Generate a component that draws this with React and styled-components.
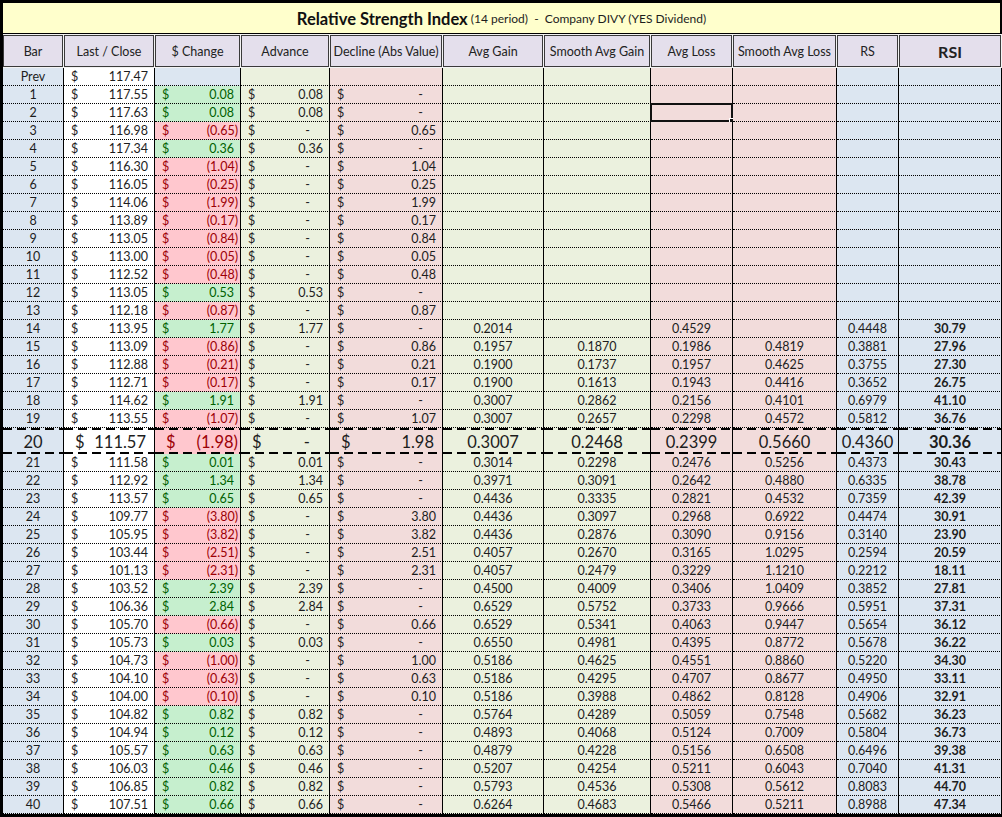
import React from "react";
import styled, { createGlobalStyle, css } from "styled-components";

const GlobalStyle = createGlobalStyle`
  html, body { margin: 0; padding: 0; background: #000; }
  body { font-family: Lato, "Open Sans", sans-serif; color: #1d1d1d; }
`;

const COLS = "61px 91px 86px 89px 113px 101px 107px 82px 104px 62px 1fr";

const BLUE = "#dce6f1";
const SAGE = "#ebf1de";
const ROSE = "#f2dcdb";
const WHITE = "#ffffff";
const GAIN_BG = "#c6efce";
const GAIN_FG = "#006100";
const LOSS_BG = "#ffc7ce";
const LOSS_FG = "#9c0006";

// bar, close, change, avg gain, smooth gain, avg loss, smooth loss, rs, rsi
const ROWS = [
  ["1", 117.55, 0.08],
  ["2", 117.63, 0.08],
  ["3", 116.98, -0.65],
  ["4", 117.34, 0.36],
  ["5", 116.3, -1.04],
  ["6", 116.05, -0.25],
  ["7", 114.06, -1.99],
  ["8", 113.89, -0.17],
  ["9", 113.05, -0.84],
  ["10", 113.0, -0.05],
  ["11", 112.52, -0.48],
  ["12", 113.05, 0.53],
  ["13", 112.18, -0.87],
  ["14", 113.95, 1.77, "0.2014", "", "0.4529", "", "0.4448", "30.79"],
  ["15", 113.09, -0.86, "0.1957", "0.1870", "0.1986", "0.4819", "0.3881", "27.96"],
  ["16", 112.88, -0.21, "0.1900", "0.1737", "0.1957", "0.4625", "0.3755", "27.30"],
  ["17", 112.71, -0.17, "0.1900", "0.1613", "0.1943", "0.4416", "0.3652", "26.75"],
  ["18", 114.62, 1.91, "0.3007", "0.2862", "0.2156", "0.4101", "0.6979", "41.10"],
  ["19", 113.55, -1.07, "0.3007", "0.2657", "0.2298", "0.4572", "0.5812", "36.76"],
  ["20", 111.57, -1.98, "0.3007", "0.2468", "0.2399", "0.5660", "0.4360", "30.36"],
  ["21", 111.58, 0.01, "0.3014", "0.2298", "0.2476", "0.5256", "0.4373", "30.43"],
  ["22", 112.92, 1.34, "0.3971", "0.3091", "0.2642", "0.4880", "0.6335", "38.78"],
  ["23", 113.57, 0.65, "0.4436", "0.3335", "0.2821", "0.4532", "0.7359", "42.39"],
  ["24", 109.77, -3.8, "0.4436", "0.3097", "0.2968", "0.6922", "0.4474", "30.91"],
  ["25", 105.95, -3.82, "0.4436", "0.2876", "0.3090", "0.9156", "0.3140", "23.90"],
  ["26", 103.44, -2.51, "0.4057", "0.2670", "0.3165", "1.0295", "0.2594", "20.59"],
  ["27", 101.13, -2.31, "0.4057", "0.2479", "0.3229", "1.1210", "0.2212", "18.11"],
  ["28", 103.52, 2.39, "0.4500", "0.4009", "0.3406", "1.0409", "0.3852", "27.81"],
  ["29", 106.36, 2.84, "0.6529", "0.5752", "0.3733", "0.9666", "0.5951", "37.31"],
  ["30", 105.7, -0.66, "0.6529", "0.5341", "0.4063", "0.9447", "0.5654", "36.12"],
  ["31", 105.73, 0.03, "0.6550", "0.4981", "0.4395", "0.8772", "0.5678", "36.22"],
  ["32", 104.73, -1.0, "0.5186", "0.4625", "0.4551", "0.8860", "0.5220", "34.30"],
  ["33", 104.1, -0.63, "0.5186", "0.4295", "0.4707", "0.8677", "0.4950", "33.11"],
  ["34", 104.0, -0.1, "0.5186", "0.3988", "0.4862", "0.8128", "0.4906", "32.91"],
  ["35", 104.82, 0.82, "0.5764", "0.4289", "0.5059", "0.7548", "0.5682", "36.23"],
  ["36", 104.94, 0.12, "0.4893", "0.4068", "0.5124", "0.7009", "0.5804", "36.73"],
  ["37", 105.57, 0.63, "0.4879", "0.4228", "0.5156", "0.6508", "0.6496", "39.38"],
  ["38", 106.03, 0.46, "0.5207", "0.4254", "0.5211", "0.6043", "0.7040", "41.31"],
  ["39", 106.85, 0.82, "0.5793", "0.4536", "0.5308", "0.5612", "0.8083", "44.70"],
  ["40", 107.51, 0.66, "0.6264", "0.4683", "0.5466", "0.5211", "0.8988", "47.34"],
];

const HEADERS = [
  "Bar",
  "Last / Close",
  "$ Change",
  "Advance",
  "Decline (Abs Value)",
  "Avg Gain",
  "Smooth Avg Gain",
  "Avg Loss",
  "Smooth Avg Loss",
  "RS",
];

const Sheet = styled.div`
  width: 1002px;
  min-height: 817px;
  box-sizing: border-box;
  padding: 3px 0 0 3px;
  background: #000;
  overflow: hidden;
`;

const TitleBar = styled.div`
  height: 31px;
  box-sizing: border-box;
  margin-right: 1px;
  padding-top: 1px;
  background: #ffffcc;
  border-bottom: 1px solid #000;
  border-right: 1px solid #000;
  display: flex;
  align-items: center;
  justify-content: center;
  white-space: pre;
`;

const TitleMain = styled.span`
  font-size: 16.5px;
  font-weight: 700;
  color: #111;
`;

const TitleSub = styled.span`
  font-size: 12px;
  color: #1d1d1d;
`;

const HeaderRow = styled.div`
  display: grid;
  grid-template-columns: ${COLS};
  padding: 1px 0;
  background: #f3f3f3;
`;

const HeaderCell = styled.div`
  height: 32px;
  box-sizing: border-box;
  margin-right: 1px;
  border: 1px solid #3a3a3a;
  background: #e4dfec;
  display: flex;
  align-items: center;
  justify-content: center;
  white-space: nowrap;
  font-size: ${(p) => (p.$strong ? "16px" : "12.5px")};
  font-weight: ${(p) => (p.$strong ? 700 : 400)};
  color: #222;
`;

const Row = styled.div`
  display: grid;
  grid-template-columns: ${COLS};
  height: ${(p) => (p.$big ? "26px" : "18px")};
  font-size: ${(p) => (p.$big ? "16.5px" : "12.5px")};
`;

const dash = "repeating-linear-gradient(90deg, #000 0 9px, transparent 9px 14px)";

const Cell = styled.div`
  position: relative;
  box-sizing: border-box;
  min-width: 0;
  border-right: 1px solid #000;
  border-bottom: 1px dotted #000;
  background: ${(p) => p.$bg};
  color: ${(p) => p.$fg || "#1d1d1d"};
  font-weight: ${(p) => (p.$bold ? 700 : 400)};
  display: flex;
  align-items: center;
  justify-content: ${(p) => (p.$money ? "space-between" : "center")};
  padding: ${(p) => (p.$money ? `0 ${p.$pr}px 0 ${p.$pl}px` : "0")};
  white-space: nowrap;
  ${(p) =>
    p.$big &&
    css`
      border-bottom: none;
      padding-top: 1px;
      background: ${dash} left top / 100% 2px no-repeat,
        ${dash} left bottom / 100% 2px no-repeat, ${p.$bg};
    `}
`;

const Selection = styled.div`
  position: absolute;
  top: -1px;
  left: -1px;
  right: -1px;
  bottom: -1px;
  border: 2px solid #111;
  pointer-events: none;
`;

const FillHandle = styled.div`
  position: absolute;
  right: -5px;
  bottom: -5px;
  width: 5px;
  height: 5px;
  background: #111;
  border: 1px solid #fff;
`;

function Money({ value, bg, fg, big, kind }) {
  const pl = big ? 11 : 7;
  const pr = kind === "neg" ? 2 : kind === "dash" ? 19 : big ? 8 : 6;
  return (
    <Cell $money $bg={bg} $fg={fg} $big={big} $pl={pl} $pr={pr}>
      <span>$</span>
      <span>{value}</span>
    </Cell>
  );
}

function DataRow({ row, index }) {
  const [bar, close, chg, ag, sg, al, sl, rs, rsi] = row;
  const big = bar === "20";
  const up = chg > 0;
  const abs = Math.abs(chg).toFixed(2);
  const stats = [
    [ag || "", SAGE],
    [sg || "", SAGE],
    [al || "", ROSE],
    [sl || "", ROSE],
    [rs || "", BLUE],
  ];
  return (
    <Row $big={big}>
      <Cell $bg={BLUE} $big={big}>{bar}</Cell>
      <Money value={close.toFixed(2)} bg={WHITE} big={big} />
      <Money
        value={up ? abs : `(${abs})`}
        bg={up ? GAIN_BG : LOSS_BG}
        fg={up ? GAIN_FG : LOSS_FG}
        kind={up ? "pos" : "neg"}
        big={big}
      />
      <Money value={up ? abs : "-"} bg={SAGE} kind={up ? "pos" : "dash"} big={big} />
      <Money value={up ? "-" : abs} bg={ROSE} kind={up ? "dash" : "pos"} big={big} />
      {stats.map(([v, bg], i) => (
        <Cell key={i} $bg={bg} $big={big}>
          {v}
          {index === 1 && i === 2 && (
            <Selection>
              <FillHandle />
            </Selection>
          )}
        </Cell>
      ))}
      <Cell $bg={BLUE} $big={big} $bold>
        {rsi || ""}
      </Cell>
    </Row>
  );
}

function PrevRow() {
  return (
    <Row>
      <Cell $bg={BLUE}>Prev</Cell>
      <Money value="117.47" bg={WHITE} />
      <Cell $bg={BLUE} />
      <Cell $bg={SAGE} />
      <Cell $bg={ROSE} />
      <Cell $bg={SAGE} />
      <Cell $bg={SAGE} />
      <Cell $bg={ROSE} />
      <Cell $bg={ROSE} />
      <Cell $bg={BLUE} />
      <Cell $bg={BLUE} />
    </Row>
  );
}

export default function App() {
  return (
    <>
      <GlobalStyle />
      <Sheet>
        <TitleBar>
          <TitleMain>Relative Strength Index</TitleMain>
          <TitleSub> (14 period)  -  Company DIVY (YES Dividend)</TitleSub>
        </TitleBar>
        <HeaderRow>
          {HEADERS.map((h) => (
            <HeaderCell key={h}>{h}</HeaderCell>
          ))}
          <HeaderCell $strong>RSI</HeaderCell>
        </HeaderRow>
        <PrevRow />
        {ROWS.map((r, i) => (
          <DataRow key={r[0]} row={r} index={i} />
        ))}
      </Sheet>
    </>
  );
}
